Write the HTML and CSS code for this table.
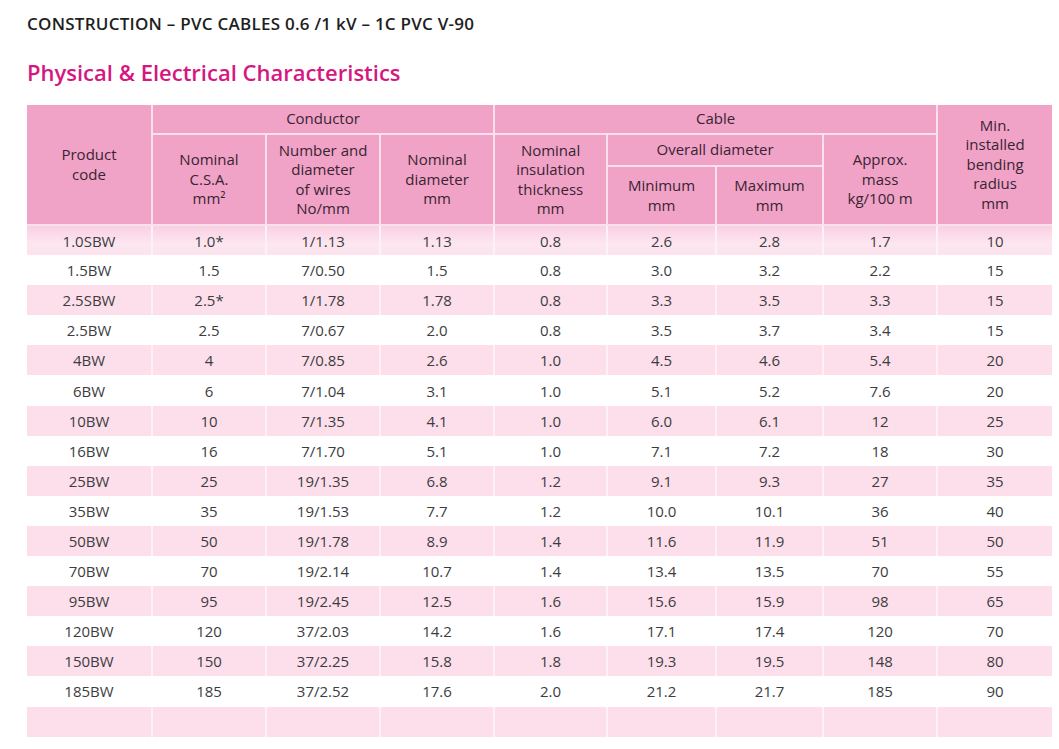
FILE: index.html
```html
<!DOCTYPE html>
<html>
<head>
<meta charset="utf-8">
<link rel="stylesheet" href="styles.css">
</head>
<body>
<div class="page">
  <h1 class="construction">CONSTRUCTION – PVC CABLES 0.6 /1 kV – 1C PVC V-90</h1>
  <h2 class="title">Physical &amp; Electrical Characteristics</h2>
  <table class="spec">
    <colgroup>
      <col class="c1"><col class="c2"><col class="c3"><col class="c4"><col class="c5"><col class="c6"><col class="c7"><col class="c8"><col class="c9">
    </colgroup>
    <thead>
      <tr class="h1">
        <th rowspan="3">Product<br>code</th>
        <th colspan="3">Conductor</th>
        <th colspan="4">Cable</th>
        <th rowspan="3">Min.<br>installed<br>bending<br>radius<br>mm</th>
      </tr>
      <tr class="h2">
        <th rowspan="2">Nominal<br>C.S.A.<br>mm²</th>
        <th rowspan="2">Number and<br>diameter<br>of wires<br>No/mm</th>
        <th rowspan="2">Nominal<br>diameter<br>mm</th>
        <th rowspan="2">Nominal<br>insulation<br>thickness<br>mm</th>
        <th colspan="2">Overall diameter</th>
        <th rowspan="2">Approx.<br>mass<br>kg/100 m</th>
      </tr>
      <tr class="h3">
        <th>Minimum<br>mm</th>
        <th>Maximum<br>mm</th>
      </tr>
    </thead>
    <tbody>
      <tr class="first"><td>1.0SBW</td><td>1.0*</td><td>1/1.13</td><td>1.13</td><td>0.8</td><td>2.6</td><td>2.8</td><td>1.7</td><td>10</td></tr>
      <tr><td>1.5BW</td><td>1.5</td><td>7/0.50</td><td>1.5</td><td>0.8</td><td>3.0</td><td>3.2</td><td>2.2</td><td>15</td></tr>
      <tr><td>2.5SBW</td><td>2.5*</td><td>1/1.78</td><td>1.78</td><td>0.8</td><td>3.3</td><td>3.5</td><td>3.3</td><td>15</td></tr>
      <tr><td>2.5BW</td><td>2.5</td><td>7/0.67</td><td>2.0</td><td>0.8</td><td>3.5</td><td>3.7</td><td>3.4</td><td>15</td></tr>
      <tr><td>4BW</td><td>4</td><td>7/0.85</td><td>2.6</td><td>1.0</td><td>4.5</td><td>4.6</td><td>5.4</td><td>20</td></tr>
      <tr><td>6BW</td><td>6</td><td>7/1.04</td><td>3.1</td><td>1.0</td><td>5.1</td><td>5.2</td><td>7.6</td><td>20</td></tr>
      <tr><td>10BW</td><td>10</td><td>7/1.35</td><td>4.1</td><td>1.0</td><td>6.0</td><td>6.1</td><td>12</td><td>25</td></tr>
      <tr><td>16BW</td><td>16</td><td>7/1.70</td><td>5.1</td><td>1.0</td><td>7.1</td><td>7.2</td><td>18</td><td>30</td></tr>
      <tr><td>25BW</td><td>25</td><td>19/1.35</td><td>6.8</td><td>1.2</td><td>9.1</td><td>9.3</td><td>27</td><td>35</td></tr>
      <tr><td>35BW</td><td>35</td><td>19/1.53</td><td>7.7</td><td>1.2</td><td>10.0</td><td>10.1</td><td>36</td><td>40</td></tr>
      <tr><td>50BW</td><td>50</td><td>19/1.78</td><td>8.9</td><td>1.4</td><td>11.6</td><td>11.9</td><td>51</td><td>50</td></tr>
      <tr><td>70BW</td><td>70</td><td>19/2.14</td><td>10.7</td><td>1.4</td><td>13.4</td><td>13.5</td><td>70</td><td>55</td></tr>
      <tr><td>95BW</td><td>95</td><td>19/2.45</td><td>12.5</td><td>1.6</td><td>15.6</td><td>15.9</td><td>98</td><td>65</td></tr>
      <tr><td>120BW</td><td>120</td><td>37/2.03</td><td>14.2</td><td>1.6</td><td>17.1</td><td>17.4</td><td>120</td><td>70</td></tr>
      <tr><td>150BW</td><td>150</td><td>37/2.25</td><td>15.8</td><td>1.8</td><td>19.3</td><td>19.5</td><td>148</td><td>80</td></tr>
      <tr><td>185BW</td><td>185</td><td>37/2.52</td><td>17.6</td><td>2.0</td><td>21.2</td><td>21.7</td><td>185</td><td>90</td></tr>
      <tr class="empty"><td></td><td></td><td></td><td></td><td></td><td></td><td></td><td></td><td></td></tr>
    </tbody>
  </table>
</div>
</body>
</html>
```
FILE: styles.css
```css
html, body {
  margin: 0;
  padding: 0;
  background: #ffffff;
}
.page {
  padding: 13px 0 0 27px;
  font-family: "Open Sans", "Noto Sans", sans-serif;
}
.construction {
  margin: 0;
  font-size: 17px;
  font-weight: 600;
  color: #1e1e22;
  line-height: 22px;
  letter-spacing: 0.25px;
}
.title {
  margin: 22px 0 0 0;
  font-size: 22px;
  font-weight: 600;
  color: #d6177f;
  line-height: 30px;
}
.spec {
  margin-top: 18px;
  width: 1025px;
  table-layout: fixed;
  border-collapse: collapse;
  font-size: 15px;
}
.c1 { width: 125px; }
.c2 { width: 114px; }
.c3 { width: 114px; }
.c4 { width: 114px; }
.c5 { width: 113px; }
.c6 { width: 109px; }
.c7 { width: 107px; }
.c8 { width: 114px; }
.c9 { width: 115px; }
.spec th {
  background: #f0a3c6;
  color: #3a2433;
  font-weight: 400;
  line-height: 19.5px;
  padding: 0;
  border: 2px solid #fbe1ec;
  vertical-align: middle;
  text-align: center;
}
.spec thead tr:first-child th { border-top: none; }
.spec th:first-child { border-left: none; }
.spec thead tr.h1 th:last-child { border-right: none; }
.h1 th { height: 28px; }
.h2 th { height: 30px; }
.h3 th { height: 57px; }
.spec td {
  height: 28px;
  padding: 0;
  text-align: center;
  color: #3c3c40;
  line-height: 28px;
  border: 2px solid #ffffff;
  border-top: none;
  border-bottom: none;
}
.spec td:first-child { border-left: none; }
.spec td:last-child { border-right: none; }
.spec tbody tr { height: 30.1px; }
.spec tbody tr:nth-child(odd) td {
  background: #fcdfeb;
  border-color: #fef1f6;
}
.spec tbody tr.first td {
  background: linear-gradient(180deg, #f9d0e2 0%, #fde6f0 60%, #fce3ee 100%);
}
.spec tbody tr.empty td {
  height: 28px;
}
```
